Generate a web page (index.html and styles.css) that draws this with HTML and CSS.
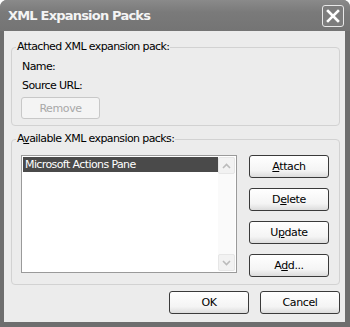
FILE: index.html
```html
<!DOCTYPE html>
<html>
    <head>
        <title>XML Expansion Packs</title>
        <link rel="stylesheet" href="styles.css">
    </head>
    <body>
        <div class="window">
            <div class="titlebar">
                <span class="title">XML Expansion Packs</span>
                <span class="close-box">
                    <svg width="14" height="14" viewBox="0 0 14 14">
                        <path d="M2 2 L12 12 M12 2 L2 12" stroke="#fff" stroke-width="2.6" stroke-linecap="square"/>
                    </svg>
                </span>
            </div>
            <div class="client">
                <fieldset class="group attached">
                    <legend>Attached XML expansion pack:</legend>
                    <div class="field">Name:</div>
                    <div class="field">Source URL:</div>
                    <button class="btn remove" disabled>Remove</button>
                </fieldset>
                <fieldset class="group available">
                    <legend>A<u>v</u>ailable XML expansion packs:</legend>
                    <div class="pack-row">
                        <div class="listbox">
                            <div class="list-items">
                                <div class="item selected">Microsoft Actions Pane</div>
                            </div>
                            <div class="scrollbar">
                                <div class="scroll-btn">
                                    <svg width="9" height="6" viewBox="0 0 9 6"><path d="M1 5 L4.5 1.5 L8 5" fill="none" stroke="#bbb" stroke-width="1.6"/></svg>
                                </div>
                                <div class="scroll-track"></div>
                                <div class="scroll-btn">
                                    <svg width="9" height="6" viewBox="0 0 9 6"><path d="M1 1 L4.5 4.5 L8 1" fill="none" stroke="#bbb" stroke-width="1.6"/></svg>
                                </div>
                            </div>
                        </div>
                        <div class="side-buttons">
                            <button class="btn"><u>A</u>ttach</button>
                            <button class="btn">D<u>e</u>lete</button>
                            <button class="btn">U<u>p</u>date</button>
                            <button class="btn">A<u>d</u>d...</button>
                        </div>
                    </div>
                </fieldset>
                <div class="footer">
                    <button class="btn">OK</button>
                    <button class="btn">Cancel</button>
                </div>
            </div>
        </div>
    </body>
</html>
```

FILE: styles.css
```css
body {
    margin: 0;
    background: #ffffff;
    font-family: "DejaVu Sans", Tahoma, sans-serif;
    font-size: 11px;
    letter-spacing: -0.6px;
    color: #000;
}
.window {
    width: 350px;
    height: 327px;
    background: #6e6e6e;
    border-radius: 7px 7px 0 0;
    display: flex;
    flex-direction: column;
    box-sizing: border-box;
}
.titlebar {
    height: 31px;
    display: flex;
    align-items: center;
    justify-content: space-between;
    padding: 0 6px 0 8px;
    background: linear-gradient(#8a8a8a, #7a7a7a 40%, #747474);
    border-radius: 7px 7px 0 0;
}
.title {
    color: #f4f4f4;
    font-family: "DejaVu Sans", sans-serif;
    font-weight: bold;
    font-size: 13px;
    letter-spacing: -0.8px;
}
.close-box {
    width: 20px;
    height: 20px;
    border: 1px solid #e8e8e8;
    border-radius: 3px;
    background: #7d7d7d;
    display: flex;
    align-items: center;
    justify-content: center;
}
.client {
    flex: 1;
    margin: 0 5px 5px 4px;
    background: #ececec;
    padding: 9px 5px 0 7px;
    display: flex;
    flex-direction: column;
}
.group {
    margin: 0;
    border: 1px solid #d2d2d2;
    border-radius: 4px;
    padding: 0 0 0 9px;
}
.group legend {
    padding: 0 1px;
    margin-left: -5px;
    line-height: 14px;
}
.attached {
    height: 86px;
    box-sizing: border-box;
}
.field {
    line-height: 19px;
    padding-left: 1px;
}
.attached .field:first-of-type {
    margin-top: 3px;
}
.btn {
    font-family: inherit;
    font-size: 11px;
    letter-spacing: -0.4px;
    width: 80px;
    height: 23px;
    padding: 0;
    border: 1px solid #3a3a3a;
    border-radius: 3px;
    background: linear-gradient(#ffffff, #f4f4f4 70%, #dcdcdc);
    color: #000;
}
.remove {
    margin-top: 2px;
    width: 79px;
    height: 22px;
    border-color: #c8c8c8;
    background: #f4f4f4;
    color: #a8a8a8;
}
.available {
    margin-top: 6px;
    height: 153px;
    box-sizing: border-box;
}
.pack-row {
    display: flex;
    margin-top: 9px;
}
.listbox {
    width: 216px;
    height: 118px;
    box-sizing: border-box;
    border: 1px solid #9a9a9a;
    background: #fff;
    display: flex;
    padding: 1px;
}
.list-items {
    flex: 1;
}
.item {
    line-height: 15px;
    padding-left: 2px;
}
.selected {
    background: #4a4a4a;
    color: #fff;
}
.scrollbar {
    width: 17px;
    display: flex;
    flex-direction: column;
    background: #fafafa;
}
.scroll-btn {
    height: 17px;
    box-sizing: border-box;
    border: 1px solid #e6e6e6;
    border-radius: 2px;
    background: #f2f2f2;
    display: flex;
    align-items: center;
    justify-content: center;
}
.scroll-track {
    flex: 1;
}
.side-buttons {
    display: flex;
    flex-direction: column;
    gap: 10px;
    margin-left: 12px;
}
.footer {
    display: flex;
    justify-content: flex-end;
    gap: 11px;
    margin-top: 6px;
}
```
